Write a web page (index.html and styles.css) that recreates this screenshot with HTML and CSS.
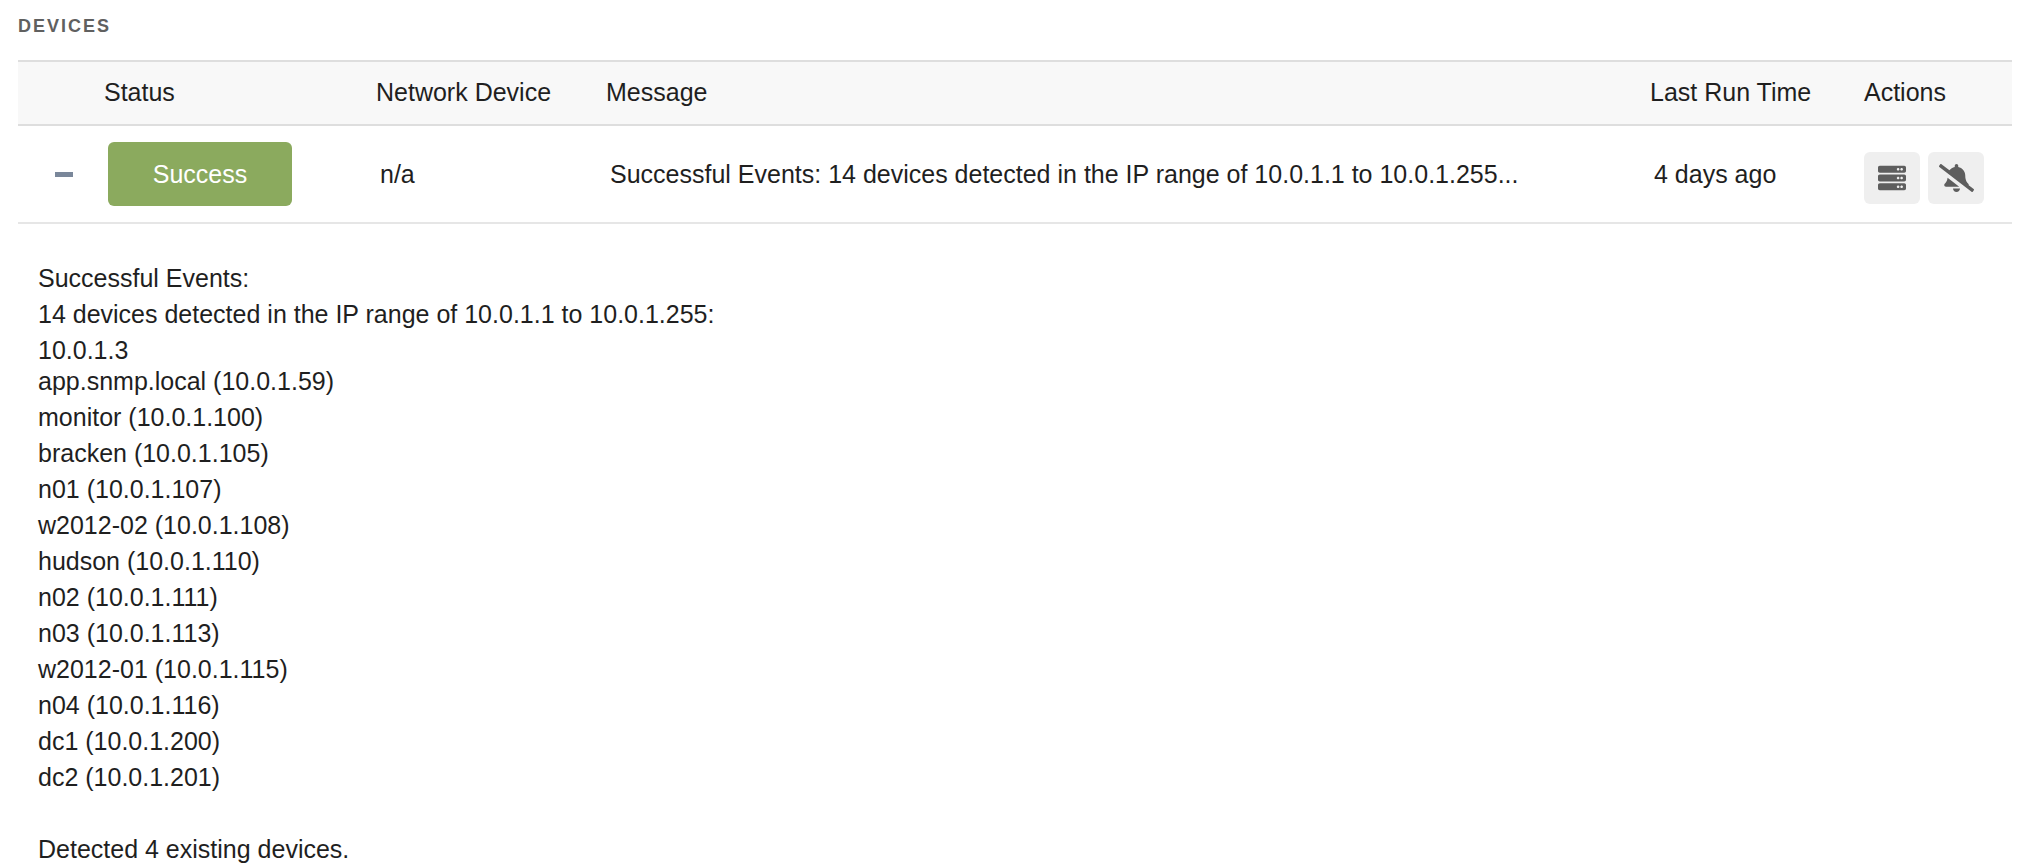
FILE: index.html
```
<!DOCTYPE html>
<html lang="en">
<head>
<meta charset="utf-8">
<title>Devices</title>
<link rel="stylesheet" href="styles.css">
</head>
<body>
<section class="panel" aria-labelledby="devices-title">
  <h2 class="panel-title" id="devices-title">DEVICES</h2>
  <table class="devices">
    <colgroup>
      <col class="col-toggle">
      <col class="col-status">
      <col class="col-device">
      <col class="col-message">
      <col class="col-time">
      <col class="col-actions">
    </colgroup>
    <thead>
      <tr>
        <th></th>
        <th scope="col">Status</th>
        <th scope="col">Network Device</th>
        <th scope="col">Message</th>
        <th scope="col">Last Run Time</th>
        <th scope="col">Actions</th>
      </tr>
    </thead>
    <tbody>
      <tr class="device-row">
        <td class="toggle-cell">
          <button class="toggle" type="button" aria-expanded="true" aria-label="Collapse details"><span class="toggle-bar"></span></button>
        </td>
        <td><span class="badge">Success</span></td>
        <td>n/a</td>
        <td>Successful Events: 14 devices detected in the IP range of 10.0.1.1 to 10.0.1.255...</td>
        <td>4 days ago</td>
        <td class="actions-cell">
          <div class="actions">
            <button class="action" type="button" aria-label="View devices">
              <svg class="icon-server" viewBox="0 0 512 512" aria-hidden="true"><path d="M480 160H32c-17.673 0-32-14.327-32-32V64c0-17.673 14.327-32 32-32h448c17.673 0 32 14.327 32 32v64c0 17.673-14.327 32-32 32zm-48-88c-13.255 0-24 10.745-24 24s10.745 24 24 24 24-10.745 24-24-10.745-24-24-24zm-64 0c-13.255 0-24 10.745-24 24s10.745 24 24 24 24-10.745 24-24-10.745-24-24-24zm112 248H32c-17.673 0-32-14.327-32-32v-64c0-17.673 14.327-32 32-32h448c17.673 0 32 14.327 32 32v64c0 17.673-14.327 32-32 32zm-48-88c-13.255 0-24 10.745-24 24s10.745 24 24 24 24-10.745 24-24-10.745-24-24-24zm-64 0c-13.255 0-24 10.745-24 24s10.745 24 24 24 24-10.745 24-24-10.745-24-24-24zm112 248H32c-17.673 0-32-14.327-32-32v-64c0-17.673 14.327-32 32-32h448c17.673 0 32 14.327 32 32v64c0 17.673-14.327 32-32 32zm-48-88c-13.255 0-24 10.745-24 24s10.745 24 24 24 24-10.745 24-24-10.745-24-24-24zm-64 0c-13.255 0-24 10.745-24 24s10.745 24 24 24 24-10.745 24-24-10.745-24-24-24z"/></svg>
            </button>
            <button class="action" type="button" aria-label="Mute alerts">
              <svg class="icon-bell" viewBox="0 0 640 512" aria-hidden="true"><path d="M633.82 458.1l-90.62-70.05c.19-1.38.8-2.66.8-4.06.05-7.55-2.61-15.29-8.61-21.72-19.32-20.76-55.47-51.99-55.47-154.29 0-77.7-54.48-139.9-127.94-155.16V32c0-17.67-14.32-32-31.98-32s-31.98 14.33-31.98 32v20.84c-40.33 8.38-74.66 31.07-97.59 62.57L45.47 3.37C38.49-2.05 28.43-.8 23.01 6.18L3.37 31.45C-2.05 38.42-.8 48.47 6.18 53.9l588.35 454.73c6.98 5.43 17.03 4.17 22.46-2.81l19.64-25.27c5.42-6.97 4.17-17.02-2.81-22.45zM157.23 251.54c-8.61 67.96-36.41 93.33-52.62 110.75-6 6.45-8.66 14.16-8.61 21.71.11 16.4 12.98 32 32.1 32h241.12L157.23 251.54zM320 512c35.32 0 63.97-28.65 63.97-64H256.03c0 35.35 28.65 64 63.97 64z"/></svg>
            </button>
          </div>
        </td>
      </tr>
      <tr>
        <td class="details" colspan="6">
          <p>Successful Events:</p>
          <p>14 devices detected in the IP range of 10.0.1.1 to 10.0.1.255:</p>
          <p>10.0.1.3</p>
          <ul class="hosts">
            <li>app.snmp.local (10.0.1.59)</li>
            <li>monitor (10.0.1.100)</li>
            <li>bracken (10.0.1.105)</li>
            <li>n01 (10.0.1.107)</li>
            <li>w2012-02 (10.0.1.108)</li>
            <li>hudson (10.0.1.110)</li>
            <li>n02 (10.0.1.111)</li>
            <li>n03 (10.0.1.113)</li>
            <li>w2012-01 (10.0.1.115)</li>
            <li>n04 (10.0.1.116)</li>
            <li>dc1 (10.0.1.200)</li>
            <li>dc2 (10.0.1.201)</li>
          </ul>
          <p>Detected 4 existing devices.</p>
        </td>
      </tr>
    </tbody>
  </table>
</section>
</body>
</html>
```
FILE: styles.css
```
body {
  margin: 0;
  background: #fff;
  color: #1f1f1f;
  font: 25px/36px "Liberation Sans", Arial, sans-serif;
}

.panel {
  padding: 14px 22px 0 18px;
}

.panel-title {
  margin: 0 0 22px;
  color: #606060;
  font-size: 18px;
  font-weight: bold;
  line-height: 24px;
  letter-spacing: 2px;
}

.devices {
  width: 100%;
  table-layout: fixed;
  border-collapse: separate;
  border-spacing: 0;
}

.col-toggle { width: 82px; }
.col-status { width: 272px; }
.col-device { width: 230px; }
.col-time { width: 214px; }
.col-actions { width: 152px; }

th {
  padding: 12px 4px 14px;
  border-top: 2px solid #dedede;
  border-bottom: 2px solid #dedede;
  background: #f8f8f8;
  font-weight: normal;
  text-align: left;
}

td {
  padding: 0 8px;
}

.device-row td {
  padding-top: 16px;
  padding-bottom: 16px;
  border-bottom: 2px solid #e6e6e6;
  white-space: nowrap;
}

.badge {
  display: block;
  width: 184px;
  border-radius: 6px;
  background: #8baa5e;
  color: #fff;
  line-height: 64px;
  text-align: center;
}

.device-row .toggle-cell {
  padding-left: 30px;
}

.toggle {
  display: flex;
  align-items: center;
  justify-content: center;
  width: 32px;
  height: 32px;
  padding: 0;
  border: 0;
  background: none;
}

.toggle-bar {
  width: 18px;
  height: 5px;
  background: #7a879a;
}

.device-row .actions-cell {
  padding: 24px 4px 16px;
}

.actions {
  display: flex;
  gap: 8px;
}

.action {
  display: flex;
  align-items: center;
  justify-content: center;
  width: 56px;
  height: 52px;
  padding: 0;
  border: 0;
  border-radius: 6px;
  background: #efefef;
  color: #5e5e5e;
}

.action svg {
  flex: none;
  height: 28px;
  fill: currentColor;
}

.icon-server { width: 28px; }
.icon-bell { width: 35px; }

.details {
  padding: 36px 20px 0;
}

.details p {
  margin: 0;
}

.hosts {
  margin: -5px 0 36px;
  padding: 0;
  list-style: none;
}
```
